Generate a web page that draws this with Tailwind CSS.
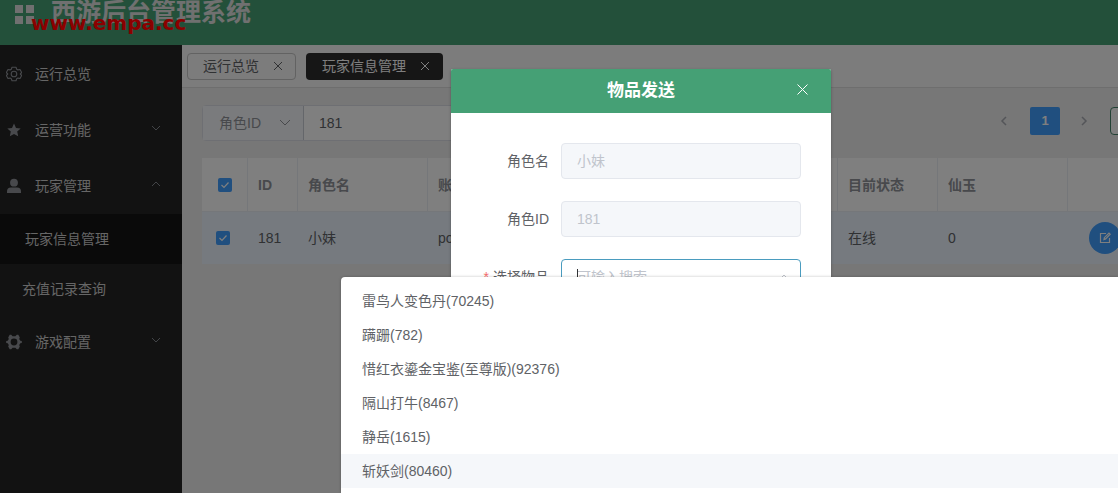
<!DOCTYPE html>
<html lang="zh-CN">
<head>
<meta charset="utf-8">
<title>西游后台管理系统</title>
<script src="https://cdn.jsdelivr.net/npm/@tailwindcss/browser@4"></script>
</head>
<body class="relative h-screen overflow-hidden bg-[#eeeeee] font-['Liberation_Sans','Noto_Sans_CJK_SC',sans-serif] text-sm text-[#606266]">
<div class="flex h-full flex-col">
  <header class="flex h-[45px] shrink-0 items-start bg-[#46a174] pl-[15px] text-[#e0e0e0]">
    <svg class="mt-[5px] h-[19px] w-[19px] shrink-0" viewBox="0 0 19 19" fill="currentColor" aria-hidden="true"><path d="M0 0h8v8H0zM11 0h8v8h-8zM0 11h8v8H0zM11 11h8v8h-8z"/></svg>
    <h1 class="-mt-1 ml-[17px] text-[25px] leading-8 font-bold whitespace-nowrap">西游后台管理系统</h1>
  </header>
  <div class="flex min-h-0 flex-1">
    <nav class="w-[182px] shrink-0 bg-[#242424] pt-px text-[#cccccc]">
      <a href="#" class="flex h-14 items-center pl-[6px]">
        <svg class="mr-[13px] h-4 w-4 text-[#909399]" viewBox="0 0 16 16" fill="none" stroke="currentColor" stroke-width="1.1" stroke-linejoin="round" aria-hidden="true"><path d="M6 1.2h4l.7 2 1.2.7 2.1-.4 1.7 3-1.4 1.5 1.4 1.5-1.7 3-2.1-.4-1.2.7-.7 2H6l-.7-2-1.2-.7-2.1.4-1.7-3L1.7 8 .3 6.500l1.7-3 2.100.4 1.200-.7z"/><circle cx="8" cy="8" r="2.800"/></svg>
        运行总览</a>
      <a href="#" class="flex h-14 items-center pr-5 pl-[6px]">
        <svg class="mr-[13px] h-4 w-4 text-[#909399]" viewBox="0 0 16 16" fill="currentColor" aria-hidden="true"><path d="M8 1.500l2 4.400 4.700.5-3.500 3.200 1 4.700L8 11.900l-4.200 2.400 1-4.700L1.300 6.400 6 5.900z"/></svg>
        运营功能
        <svg class="mr-px mb-1 ml-auto h-[10px] w-[10px] text-[#85888e]" viewBox="0 0 10 10" fill="none" stroke="currentColor" aria-hidden="true"><path d="M1 3l4 4 4-4"/></svg></a>
      <a href="#" class="flex h-14 items-center pr-5 pl-[6px]">
        <svg class="mr-[13px] h-4 w-4 text-[#909399]" viewBox="0 0 16 16" fill="currentColor" aria-hidden="true"><circle cx="8" cy="4.700" r="3.900"/><path d="M1 15v-1.500q0-4 4-4h6q4 0 4 4V15z"/></svg>
        玩家管理
        <svg class="mr-px mb-1 ml-auto h-[10px] w-[10px] text-[#85888e]" viewBox="0 0 10 10" fill="none" stroke="currentColor" aria-hidden="true"><path d="M1 7l4-4 4 4"/></svg></a>
      <a href="#" class="flex h-[50px] items-center bg-[#141414] pl-[25px]">玩家信息管理</a>
      <a href="#" class="flex h-[50px] items-center pl-[22px]">充值记录查询</a>
      <a href="#" class="flex h-14 items-center pr-5 pl-[6px]">
        <svg class="mr-[13px] h-4 w-4 text-[#909399]" viewBox="0 0 16 16" fill="currentColor" fill-rule="evenodd" aria-hidden="true"><path d="M3.700.8h1.500L6.600 2.300h2.800L10.800.8h1.500l1.500 2.600-.6 1.700 1.100 1.700 1.500.3v1.800l-1.500.3-1.100 1.700.6 1.700-1.500 2.600h-1.500L9.400 13.700H6.600l-1.400 1.500H3.700L2.200 12.600l.6-1.700-1.100-1.700-1.500-.3V7.100l1.500-.3 1.100-1.700-.6-1.700zM8 4.600a3.400 3.400 0 1 0 0 6.800 3.400 3.400 0 1 0 0-6.800z"/></svg>
        游戏配置
        <svg class="mr-px mb-1 ml-auto h-[10px] w-[10px] text-[#85888e]" viewBox="0 0 10 10" fill="none" stroke="currentColor" aria-hidden="true"><path d="M1 3l4 4 4-4"/></svg></a>
    </nav>
    <main class="min-w-0 flex-1 overflow-hidden">
      <div class="flex h-[43px] items-center gap-[10px] border-b border-[#dcdcdc] bg-[#f8f8f8] pl-[5px]">
        <button class="flex h-[27px] items-center gap-[14px] rounded border border-[#c4c4c4] pr-[12px] pl-[15px]">运行总览
          <svg class="h-[10px] w-[10px]" viewBox="0 0 10 10" stroke="currentColor" aria-hidden="true"><path d="M1 1l8 8M9 1l-8 8"/></svg></button>
        <button class="flex h-[27px] items-center gap-[14px] rounded bg-[#2c2c2c] pr-[13px] pl-4 text-white">玩家信息管理
          <svg class="h-[10px] w-[10px]" viewBox="0 0 10 10" stroke="currentColor" aria-hidden="true"><path d="M1 1l8 8M9 1l-8 8"/></svg></button>
      </div>
      <div class="w-[1060px] pt-[17px] pl-5">
        <div class="flex items-center">
          <div class="flex h-9 w-[340px] rounded border border-[#dcdfe6] bg-white">
            <div class="relative w-[101px] border-r border-[#c8ccd4] bg-[#f5f7fa] text-[#909399]">
              <select aria-label="搜索类型" class="h-full w-full appearance-none pl-4"><option>角色ID</option></select>
              <svg class="pointer-events-none absolute top-3 right-3 h-[10px] w-3" viewBox="0 0 12 10" fill="none" stroke="currentColor" aria-hidden="true"><path d="M1 2l5 5 5-5"/></svg>
            </div>
            <input aria-label="搜索内容" value="181" class="min-w-0 flex-1 px-[15px]">
          </div>
          <div class="ml-[453px] flex items-center text-[#a8abb2]">
            <button aria-label="上一页" class="grid h-7 w-[18px] -translate-y-0.5 place-items-center"><svg class="h-[10px] w-[10px]" viewBox="0 0 10 10" fill="none" stroke="currentColor" stroke-width="1.500" aria-hidden="true"><path d="M7 1L3 5l4 4"/></svg></button>
            <button class="mr-[15px] ml-[17px] h-7 w-[30px] -translate-y-0.5 rounded-xs bg-[#409eff] text-[13px] font-bold text-white">1</button>
            <button aria-label="下一页" class="grid h-7 w-[18px] -translate-y-0.5 place-items-center"><svg class="h-[10px] w-[10px]" viewBox="0 0 10 10" fill="none" stroke="currentColor" stroke-width="1.500" aria-hidden="true"><path d="M3 1l4 4-4 4"/></svg></button>
            <button aria-label="跳转" class="ml-[17px] h-7 w-[60px] -translate-y-0.5 rounded border border-[#46846a] bg-white"></button>
          </div>
        </div>
        <table class="mt-[17px] w-[1020px] table-fixed border-separate border-spacing-0 text-left">
          <colgroup><col class="w-[46px]"><col class="w-[50px]"><col class="w-[130px]"><col class="w-[410px]"><col class="w-[100px]"><col class="w-[130px]"><col></colgroup>
          <thead>
            <tr class="h-[54px] bg-white text-[#909399] [&>th]:border-r [&>th]:border-b [&>th]:border-[#ebeef5]">
              <th><span class="ml-4 grid h-[14px] w-[14px]"><input type="checkbox" checked aria-label="全选" class="col-start-1 row-start-1 appearance-none rounded-xs bg-[#409eff]"><svg class="pointer-events-none col-start-1 row-start-1" viewBox="0 0 14 14" fill="none" stroke="#fff" stroke-width="1.200" aria-hidden="true"><path d="M3.500 7l2.500 2.500 4.500-5"/></svg></span></th>
              <th class="pl-[10px]">ID</th><th class="pl-[10px]">角色名</th><th class="pl-[10px]">账号</th><th class="pl-[10px]">目前状态</th><th class="pl-[10px]">仙玉</th><th></th>
            </tr>
          </thead>
          <tbody>
            <tr class="h-[52px] bg-[#ecf5ff]">
              <td><span class="ml-[14px] grid h-[14px] w-[14px]"><input type="checkbox" checked aria-label="选择小妹" class="col-start-1 row-start-1 appearance-none rounded-xs bg-[#409eff]"><svg class="pointer-events-none col-start-1 row-start-1" viewBox="0 0 14 14" fill="none" stroke="#fff" stroke-width="1.200" aria-hidden="true"><path d="M3.500 7l2.500 2.500 4.500-5"/></svg></span></td>
              <td class="pl-[10px]">181</td><td class="pl-[10px]">小妹</td><td class="pl-[10px]">po</td><td class="pl-[10px]">在线</td><td class="pl-[10px]">0</td>
              <td class="pl-[21px]"><button aria-label="编辑" class="grid h-8 w-8 place-items-center rounded-full bg-[#409eff] text-white"><svg class="h-3 w-3" viewBox="0 0 12 12" fill="none" stroke="currentColor" stroke-width="1.200" aria-hidden="true"><path d="M7 1.500H1.500v9h9V6M5 7.500l.3-1.800L10 1l1.200 1.200-4.600 4.700z"/></svg></button></td>
            </tr>
          </tbody>
        </table>
      </div>
    </main>
  </div>
</div>

<div class="absolute inset-0 bg-black/50"></div>
<p class="absolute top-[11px] left-[31px] font-['DejaVu_Sans'] text-[20px] leading-6 font-bold text-[#8b0000]">www.empa.cc</p>

<section role="dialog" aria-labelledby="dialog-title" class="absolute top-[69px] left-[451px] w-[380px] rounded-xs bg-white pb-10 shadow-[0_1px_3px_rgba(0,0,0,0.3)]">
  <div class="relative flex h-11 items-center justify-center rounded-t-xs bg-[#45a075] text-white">
    <h2 id="dialog-title" class="text-[17px] font-bold">物品发送</h2>
    <button aria-label="关闭" class="absolute top-[15px] right-[23px]"><svg class="h-[11px] w-[11px]" viewBox="0 0 11 11" stroke="currentColor" aria-hidden="true"><path d="M.5.500l10 10M10.500.500l-10 10"/></svg></button>
  </div>
  <form class="flex flex-col gap-[22px] px-[30px] pt-[30px]">
    <div class="flex h-9 items-center"><label for="role-name" class="w-20 shrink-0 pr-3 text-right">角色名</label><input id="role-name" disabled value="小妹" class="h-9 min-w-0 flex-1 rounded border border-[#e4e7ed] bg-[#f5f7fa] px-[15px] pb-0.5 text-[#c0c4cc]"></div>
    <div class="flex h-9 items-center"><label for="role-id" class="w-20 shrink-0 pr-3 text-right">角色ID</label><input id="role-id" disabled value="181" class="h-9 min-w-0 flex-1 rounded border border-[#e4e7ed] bg-[#f5f7fa] px-[15px] text-[#c0c4cc]"></div>
    <div class="flex h-9 items-center"><label for="item" class="w-20 shrink-0 pr-3 text-right"><span class="mr-1 text-[#f56c6c]">*</span>选择物品</label>
      <div class="relative flex-1"><input id="item" placeholder="可输入搜索" class="h-9 w-full rounded border border-[#4a9cbf] px-[15px] outline-none placeholder:text-[#c0c4cc]">
        <span class="absolute top-[10px] left-4 h-4 w-px bg-[#303133]"></span>
        <svg class="absolute top-[14px] right-[11px] h-[10px] w-3 text-[#c0c4cc]" viewBox="0 0 12 10" fill="none" stroke="currentColor" aria-hidden="true"><path d="M1 7l5-5 5 5"/></svg></div></div>
  </form>
</section>

<ul role="listbox" class="absolute top-[277px] right-0 bottom-0 left-[341px] overflow-hidden rounded-tl bg-white pt-[7px] shadow-[0_0_3px_rgba(0,0,0,0.25)] [&>li]:flex [&>li]:h-[34px] [&>li]:items-center [&>li]:pl-[21px]">
  <li role="option">雷鸟人变色丹(70245)</li>
  <li role="option">蹒跚(782)</li>
  <li role="option">惜红衣鎏金宝鉴(至尊版)(92376)</li>
  <li role="option">隔山打牛(8467)</li>
  <li role="option">静岳(1615)</li>
  <li role="option" class="bg-[#f5f7fa]">斩妖剑(80460)</li>
</ul>
</body>
</html>
